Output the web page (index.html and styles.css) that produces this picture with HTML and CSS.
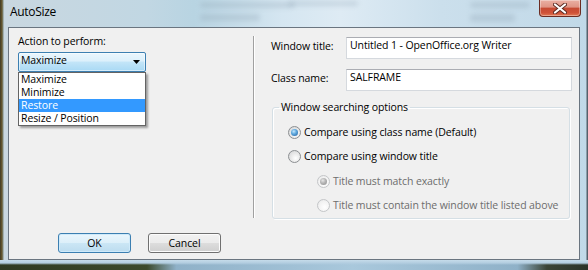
FILE: index.html
```html
<!DOCTYPE html>
<html>
<head>
<meta charset="utf-8">
<title>AutoSize</title>
<link rel="stylesheet" href="styles.css">
</head>
<body>
<div class="window">
  <div class="ghost g1"></div>
  <div class="ghost g2"></div>
  <div class="ghost g3"></div>
  <div class="ghost g4"></div>
  <div class="ghost g5"></div>
  <div class="titlebar">
    <span class="title">AutoSize</span>
    <button class="close" aria-label="Close">
      <svg width="14" height="11" viewBox="0 0 14 11">
        <path d="M2 1.5 L12 9.5 M12 1.5 L2 9.5" stroke="#5a2a22" stroke-width="4" stroke-linecap="round"/>
        <path d="M2 1.5 L12 9.5 M12 1.5 L2 9.5" stroke="#ffffff" stroke-width="2.2" stroke-linecap="round"/>
      </svg>
    </button>
  </div>
  <div class="client">
    <div class="main">
      <div class="left">
        <div class="lbl">Action to perform:</div>
        <div class="combo-wrap">
          <div class="combo">
            <span>Maximize</span>
            <svg class="arrow" width="7" height="4" viewBox="0 0 7 4"><path d="M0 0 H7 L3.5 4 Z" fill="#000"/></svg>
          </div>
          <ul class="list">
            <li>Maximize</li>
            <li>Minimize</li>
            <li class="sel">Restore</li>
            <li>Resize / Position</li>
          </ul>
        </div>
      </div>
      <div class="sep"></div>
      <div class="right">
        <div class="field">
          <span class="flabel">Window title:</span>
          <div class="input">Untitled 1 - OpenOffice.org Writer</div>
        </div>
        <div class="field">
          <span class="flabel">Class name:</span>
          <div class="input">SALFRAME</div>
        </div>
        <fieldset class="group">
          <legend>Window searching options</legend>
          <div class="opts">
            <div class="opt"><span class="radio checked"></span><span>Compare using class name (Default)</span></div>
            <div class="opt"><span class="radio"></span><span>Compare using window title</span></div>
            <div class="subopts">
              <div class="opt sub disabled"><span class="radio checked"></span><span>Title must match exactly</span></div>
              <div class="opt sub disabled"><span class="radio"></span><span>Title must contain the window title listed above</span></div>
            </div>
          </div>
        </fieldset>
      </div>
    </div>
    <div class="buttons">
      <button class="btn default">OK</button>
      <button class="btn">Cancel</button>
    </div>
  </div>
  <div class="bottomframe"></div>
</div>
</body>
</html>
```
FILE: styles.css
```css
* { box-sizing: border-box; }
html, body { margin: 0; padding: 0; }
body {
  width: 588px;
  height: 270px;
  overflow: hidden;
  background: #3a4232;
  font-family: "Open Sans", "Noto Sans", sans-serif;
  font-size: 10.5px;
  letter-spacing: -0.1px;
  color: #000;
}
.window {
  position: relative;
  width: 588px;
  height: 270px;
  display: flex;
  flex-direction: column;
  overflow: hidden;
  background:
    linear-gradient(90deg, #3d3a26 0, #6b5a2e 2px, #7d8a80 3px, rgba(0,0,0,0) 4px),
    linear-gradient(90deg, rgba(0,0,0,0) 586px, #56606a 587px),
    linear-gradient(90deg, #c9d7e0 0%, #c1d7e3 25%, #b8d4e2 33%, #d5e6f1 48%, #deebf4 58%, #cbdfec 75%, #c1d9e8 100%);
}
.ghost {
  position: absolute;
  background: #8fa3b3;
  opacity: 0.3;
  filter: blur(2.5px);
  border-radius: 3px;
}
.g1 { left: 200px; top: 2px; width: 95px; height: 6px; }
.g2 { left: 200px; top: 14px; width: 60px; height: 7px; }
.g3 { left: 288px; top: 1px; width: 70px; height: 5px; }
.g4 { left: 470px; top: 2px; width: 60px; height: 6px; }
.g5 { left: 470px; top: 14px; width: 45px; height: 8px; }

.titlebar {
  position: relative;
  height: 27px;
  flex: none;
  display: flex;
  justify-content: space-between;
  align-items: flex-start;
  padding-left: 10px;
  padding-right: 7px;
}
.title {
  padding-top: 4px;
  font-size: 12px;
  line-height: 16px;
  letter-spacing: -0.3px;
  color: #000;
}
.close {
  width: 42px;
  height: 17px;
  margin: 0;
  padding: 0;
  border: 1px solid #6b2c22;
  border-top: none;
  border-radius: 0 0 4px 4px;
  background: linear-gradient(#eab0a4 0%, #e09484 45%, #c64a33 50%, #cf5238 80%, #e27a55 100%);
  box-shadow: inset 0 0 0 1px rgba(255,255,255,0.35);
  display: flex;
  align-items: center;
  justify-content: center;
}

.client {
  flex: none;
  height: 233px;
  margin: 0 8px;
  border: 1px solid #6a7580;
  background: #f0f0f0;
  display: flex;
  flex-direction: column;
}
.main {
  height: 195px;
  display: flex;
}
.left {
  width: 244px;
  padding: 7px 0 0 9px;
}
.lbl { line-height: 13px; }
.combo-wrap {
  position: relative;
  margin-top: 4px;
  width: 128px;
}
.combo {
  height: 20px;
  border: 1px solid #3c7fb1;
  border-radius: 2px;
  background: linear-gradient(#eaf6fd 0%, #dcf0fb 45%, #c3e5f8 50%, #a9d9f4 100%);
  box-shadow: inset 0 0 0 1px rgba(255,255,255,0.5);
  display: flex;
  justify-content: space-between;
  align-items: flex-start;
  padding: 0 5px 0 2px;
  line-height: 14px;
}
.arrow { margin-top: 7px; }
.list {
  position: absolute;
  left: 0;
  top: 20px;
  width: 128px;
  margin: 0;
  padding: 0;
  list-style: none;
  border: 1px solid #646464;
  background: #fff;
  box-shadow: 2px 2px 2px rgba(0,0,0,0.35);
}
.list li {
  height: 13px;
  line-height: 13px;
  padding-left: 2px;
}
.list li.sel {
  background: #3399ff;
  color: #fff;
}
.sep {
  width: 2px;
  height: 182px;
  margin-top: 8px;
  border-left: 1px solid #a0a0a0;
  border-right: 1px solid #ffffff;
}
.right {
  flex: 1;
  padding: 9px 7px 0 16px;
}
.field {
  display: flex;
  align-items: flex-start;
  height: 22px;
  margin-bottom: 10px;
}
.flabel {
  width: 75px;
  padding-top: 3px;
  line-height: 13px;
}
.input {
  width: 226px;
  height: 22px;
  background: #fff;
  border: 1px solid #d5d9de;
  border-top-color: #abadb3;
  padding: 1px 3px;
  line-height: 13px;
}
.group {
  margin: 1px 0 0 1px;
  width: 298px;
  height: 118px;
  padding: 0;
  border: 1px solid #d5dfe5;
  border-radius: 3px;
  box-shadow: inset 1px 1px 0 #fff, 1px 1px 0 #fff;
}
.group legend {
  padding: 0 2px;
  margin-left: 6px;
  line-height: 13px;
}
.opts { padding: 6px 0 0 15px; }
.opt {
  height: 24px;
  display: flex;
  align-items: center;
  line-height: 13px;
}
.subopts { padding-top: 1px; }
.opt.sub { padding-left: 29px; }
.opt.disabled { color: #6d6d6d; }
.radio {
  position: relative;
  width: 13px;
  height: 13px;
  margin-right: 3px;
  flex: none;
  border-radius: 50%;
  border: 1px solid #8c8f92;
  background: radial-gradient(circle at 60% 65%, #ffffff 0%, #e8e8e8 50%, #cfd1d3 100%);
}
.radio.checked::after {
  content: "";
  position: absolute;
  left: 2px;
  top: 2px;
  width: 7px;
  height: 7px;
  border-radius: 50%;
  background: radial-gradient(circle at 40% 35%, #c6e8fd 0%, #5fa9de 40%, #1f5a9c 100%);
}
.disabled .radio {
  border-color: #c4c6c8;
  background: radial-gradient(circle at 60% 65%, #ffffff 0%, #f2f2f2 60%, #e2e3e4 100%);
}
.disabled .radio.checked::after {
  background: radial-gradient(circle at 40% 35%, #e6e6e6 0%, #b4b4b4 45%, #8c8c8c 100%);
}
.buttons {
  display: flex;
  padding: 10px 0 0 49px;
  gap: 17px;
}
.btn {
  width: 73px;
  height: 20px;
  margin: 0;
  padding: 0;
  font-family: inherit;
  font-size: 10.5px;
  letter-spacing: -0.1px;
  color: #000;
  border: 1px solid #707070;
  border-radius: 3px;
  background: linear-gradient(#f2f2f2 0%, #ebebeb 50%, #dddddd 51%, #cfcfcf 100%);
  box-shadow: inset 0 0 0 1px #fcfcfc;
  line-height: 16px;
}
.btn.default {
  border-color: #3c7fb1;
  background: linear-gradient(#eaf6fd 0%, #dceff9 50%, #cbe6f5 51%, #bcdcef 100%);
  box-shadow: inset 0 0 0 1px #cfeafa;
}
.bottomframe {
  flex: 1;
  background:
    linear-gradient(#c6dcea 0, #b2cde0 3px, rgba(90,110,100,0.0) 5px),
    linear-gradient(90deg, #2f3a22 0%, #3c4a2c 25%, #8fb1c8 30%, #a9c8dc 60%, #8fb1c8 88%, #3a4436 93%, #2b3328 100%);
}
```
